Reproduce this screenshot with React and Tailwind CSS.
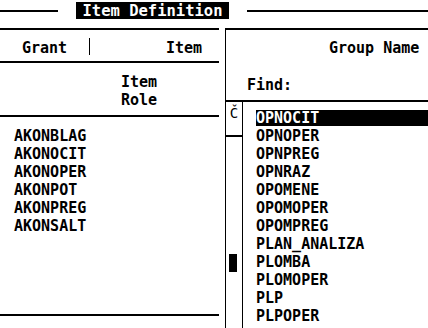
const grants = ['AKONBLAG', 'AKONOCIT', 'AKONOPER', 'AKONPOT', 'AKONPREG', 'AKONSALT']

const groups = [
  'OPNOCIT',
  'OPNOPER',
  'OPNPREG',
  'OPNRAZ',
  'OPOMENE',
  'OPOMOPER',
  'OPOMPREG',
  'PLAN_ANALIZA',
  'PLOMBA',
  'PLOMOPER',
  'PLP',
  'PLPOPER',
]

export default function App() {
  const font = { fontFamily: '"DejaVu Sans Mono", "Liberation Mono", monospace' }

  return (
    <div className="h-[328px] w-[428px] overflow-hidden bg-white text-[15px] font-bold text-black" style={font}>
      {/* title bar */}
      <div className="flex h-[28px] items-start">
        <div className="mt-[10px] h-[2px] w-[58px] bg-black" />
        <div className="ml-[18px] mt-[2px] flex h-[17px] w-[153px] items-center justify-center bg-black text-[15.5px] leading-4 text-white">
          Item Definition
        </div>
        <div className="ml-[18px] mt-[10px] h-[2px] flex-1 bg-black" />
      </div>

      <div className="flex h-[300px]">
        {/* left pane */}
        <div className="flex w-[219px] flex-col">
          <div className="flex h-[35px] items-start border-y-2 border-black pt-[8px]">
            <span className="mt-[2px] block w-[89px] shrink-0 pl-[22px] leading-4">Grant</span>
            <span className="block h-[17px] w-px shrink-0 bg-black" />
            <span className="ml-[76px] mt-[2px] block leading-4">Item</span>
          </div>
          <div className="h-[54px] border-b-2 border-black pl-[121px] pt-[10px] leading-[18px]">
            <div>Item</div>
            <div>Role</div>
          </div>
          <div className="flex h-[199px] flex-col gap-[2px] border-b-2 border-black pl-[14px] pt-[11px]">
            {grants.map((g) => (
              <div key={g} className="h-4 leading-4">{g}</div>
            ))}
          </div>
        </div>

        {/* right pane */}
        <div className="ml-[6px] flex flex-1 flex-col border-l border-t-2 border-black">
          <div className="h-[72px] border-b-2 border-black">
            <div className="pl-[103px] pt-[10px] leading-4">Group Name</div>
            <div className="pl-[21px] pt-[21px] leading-4">Find:</div>
          </div>
          <div className="flex flex-1">
            <div className="flex w-[17px] flex-col border-r border-black">
              <div className="flex h-[35px] justify-center border-b-2 border-black pt-[3px] text-[14px] font-normal leading-4">
                Č
              </div>
              <div className="ml-[3px] mt-[117px] h-[18px] w-[8px] bg-black" />
            </div>
            <div className="flex flex-1 flex-col gap-[2px] pl-[13px] pt-[8px]">
              {groups.map((g, i) => (
                <div key={g} className={`h-4 leading-4 ${i === 0 ? 'bg-black text-white' : ''}`}>
                  {g}
                </div>
              ))}
            </div>
          </div>
        </div>
      </div>
    </div>
  )
}
